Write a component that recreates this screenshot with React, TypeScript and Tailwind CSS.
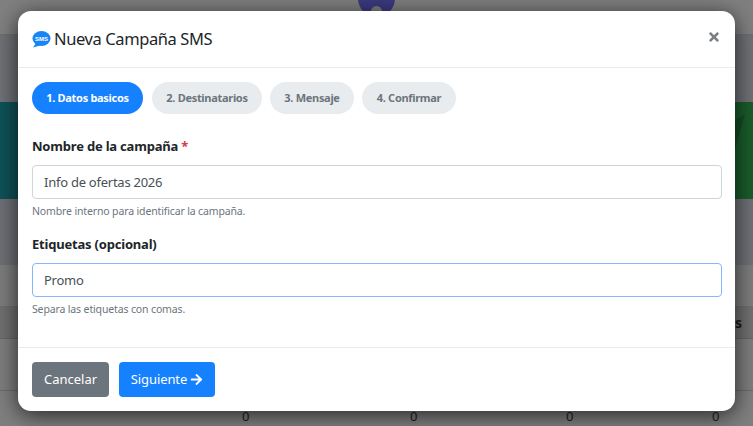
import { FaArrowRight, FaTimes } from "react-icons/fa";

function SmsIcon() {
  return (
    <svg width="19" height="17" viewBox="0 0 19 17" className="shrink-0">
      <ellipse cx="9.5" cy="7.5" rx="9" ry="7.5" fill="#1a86f5" />
      <path d="M4 12 L1 16.5 L8 14.5 Z" fill="#1a86f5" />
      <text x="9.5" y="9.6" textAnchor="middle" fontSize="6" fontWeight="700" fill="#fff" fontFamily="'Liberation Sans', sans-serif">SMS</text>
    </svg>
  );
}

function Step({ label, active, width }: { label: string; active?: boolean; width: string }) {
  return (
    <div className={`${width} ${active ? "bg-[#1681ff] text-white" : "bg-[#e9ecef] text-[#6c757d]"} flex h-8 items-center justify-center rounded-full text-[11px] font-bold tracking-[-0.3px]`}>
      {label}
    </div>
  );
}

function Background() {
  return (
    <div className="flex h-[426px] w-[753px] flex-col bg-[#7f7f7f] text-[#1c1c1c]">
      <div className="flex h-[35px] justify-center border-b border-[#6f6f6f] bg-[#808080]">
        <div className="relative -mt-[20px] flex h-[37px] w-[37px] items-end justify-center rounded-full bg-[#3b3a80]">
          <div className="mb-[2px] h-[9px] w-[11px] rounded-t-full bg-[#7f7f80]" />
        </div>
      </div>
      <div className="h-[67px] bg-[#6f7175]" />
      <div className="relative h-[97px] overflow-hidden bg-[linear-gradient(90deg,#0e5258,#105650_50%,#1a5c2a)]">
        <svg className="absolute right-0 top-0 h-full w-[38px]" viewBox="0 0 38 97">
          <path d="M0 30 L30 12 L12 75 L3 78 Z" fill="#134c22" />
        </svg>
      </div>
      <div className="h-[66px] bg-[#6e7075]" />
      <div className="h-[42px] border-b border-[#6d6d6d] bg-[#7d7d7d]" />
      <div className="flex h-[32px] items-center justify-end border-b border-[#666] bg-[#707070] pr-[11px] text-[14px] font-bold">
        <span className="font-['Noto_Sans',sans-serif]">s</span>
      </div>
      <div className="h-[52px] border-b border-[#6a6a6a] bg-[#7e7e7e]" />
      <div className="flex flex-1 pl-[242px] pt-[16px] font-['Noto_Sans',sans-serif] text-[13px] leading-[18px]">
        <span className="w-[168px]">0</span>
        <span className="w-[156px]">0</span>
        <span className="w-[146px]">0</span>
        <span>0</span>
      </div>
    </div>
  );
}

export default function App() {
  return (
    <div className="relative h-[426px] w-[753px] overflow-hidden font-['Noto_Sans',sans-serif]">
      <Background />
      <div className="absolute left-[18px] top-[11px] flex h-[400px] w-[717px] flex-col rounded-[13px] bg-white shadow-[0_4px_22px_rgba(0,0,0,0.7)]">
        <div className="flex h-[57px] items-center justify-between border-b border-[#e9ecef] pl-[14px] pr-[14px]">
          <div className="flex items-center gap-[3px]">
            <SmsIcon />
            <h1 className="text-[16.5px] leading-6 tracking-[-0.4px] text-[#212529]">Nueva Campaña SMS</h1>
          </div>
          <FaTimes className="mb-[5px] text-[14px] text-[#7b7f83]" />
        </div>

        <div className="flex flex-1 flex-col px-[14px] pt-[14px]">
          <div className="flex gap-[8px]">
            <Step label="1. Datos basicos" active width="mr-px w-[111px]" />
            <Step label="2. Destinatarios" width="w-[110px]" />
            <Step label="3. Mensaje" width="w-[84px]" />
            <Step label="4. Confirmar" width="w-[94px]" />
          </div>

          <label className="mt-[22px] text-[13px] font-bold leading-5 tracking-[-0.2px] text-[#212529]">
            Nombre de la campaña <span className="text-[#dc3545]">*</span>
          </label>
          <input
            readOnly
            value="Info de ofertas 2026"
            className="mt-[9px] h-[34px] w-[690px] rounded-[4px] border border-[#ced4da] px-[11px] text-[13px] tracking-[-0.25px] text-[#495057] outline-none"
          />
          <p className="mt-[5px] text-[10.5px] leading-[14px] tracking-[-0.14px] text-[#6c757d]">Nombre interno para identificar la campaña.</p>

          <label className="mt-[16px] text-[13px] font-bold leading-5 tracking-[-0.2px] text-[#212529]">Etiquetas (opcional)</label>
          <input
            readOnly
            value="Promo"
            className="mt-[9px] h-[34px] w-[690px] rounded-[4px] border border-[#86b7fe] px-[11px] text-[13px] tracking-[-0.25px] text-[#495057] outline-none"
          />
          <p className="mt-[5px] text-[10.5px] leading-[14px] tracking-[-0.14px] text-[#6c757d]">Separa las etiquetas con comas.</p>
        </div>

        <div className="flex h-[64px] items-start gap-[10px] border-t border-[#e9ecef] px-[14px] pt-[14px]">
          <button className="flex h-[35px] w-[77px] items-center justify-center rounded-[4px] bg-[#6c757d] text-[13px] text-white">Cancelar</button>
          <button className="flex h-[35px] w-[96px] items-center justify-center gap-[3px] rounded-[4px] bg-[#1681ff] text-[13px] tracking-[-0.1px] text-white">
            Siguiente <FaArrowRight className="text-[13px]" />
          </button>
        </div>
      </div>
    </div>
  );
}
